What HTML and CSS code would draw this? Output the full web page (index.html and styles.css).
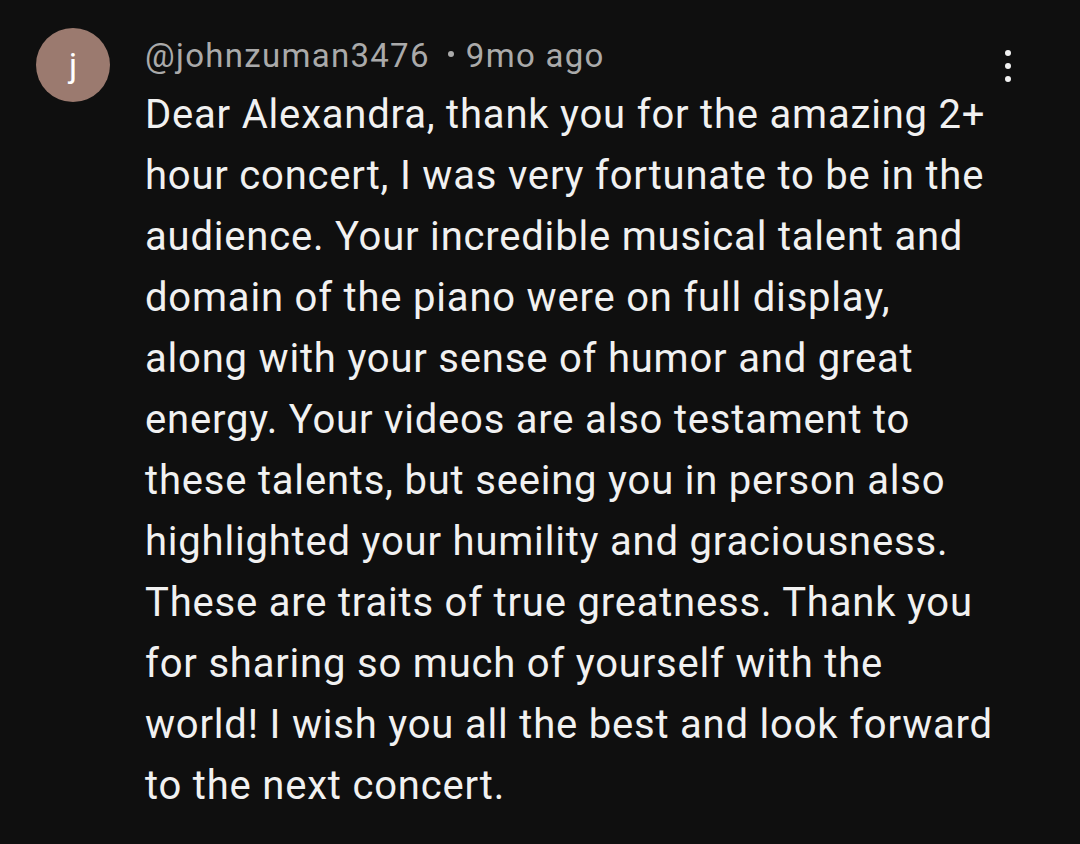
FILE: index.html
```html
<!DOCTYPE html>
<html>
<head>
<meta charset="utf-8">
<link rel="stylesheet" href="styles.css">
</head>
<body>
<div class="comment">
  <div class="avatar">j</div>
  <div class="content">
    <div class="meta"><span class="author">@johnzuman3476</span><span class="sep"></span><span class="time">9mo ago</span></div>
    <p class="text">Dear Alexandra, thank you for the amazing 2+<br>hour concert, I was very fortunate to be in the<br>audience. Your incredible musical talent and<br>domain of the piano were on full display,<br>along with your sense of humor and great<br>energy. Your videos are also testament to<br>these talents, but seeing you in person also<br>highlighted your humility and graciousness.<br>These are traits of true greatness. Thank you<br>for sharing so much of yourself with the<br>world! I wish you all the best and look forward<br>to the next concert.</p>
  </div>
  <div class="menu">
    <span class="dot"></span><span class="dot"></span><span class="dot"></span>
  </div>
</div>
</body>
</html>
```
FILE: styles.css
```css
html, body {
  margin: 0;
  padding: 0;
  background: #0f0f0f;
  height: 100%;
}
body {
  font-family: Roboto, "Liberation Sans", sans-serif;
  color: #f1f1f1;
}
.comment {
  display: flex;
  align-items: flex-start;
  padding: 28px 0 0 36px;
}
.avatar {
  flex: none;
  width: 74px;
  height: 74px;
  border-radius: 50%;
  background: #9b7a6f;
  color: #fff;
  font-size: 34px;
  display: flex;
  align-items: center;
  justify-content: center;
}
.content {
  margin-left: 35px;
  margin-top: 6px;
  width: 900px;
}
.meta {
  color: #aaaaaa;
  font-size: 33px;
  line-height: 44px;
  letter-spacing: 1.3px;
  white-space: nowrap;
}
.sep {
  display: inline-block;
  width: 6px;
  height: 6px;
  border-radius: 50%;
  background: #aaaaaa;
  margin: 0 12px 0 18px;
  vertical-align: 10px;
}
.text {
  margin: 6px 0 0;
  font-size: 40px;
  line-height: 61px;
  letter-spacing: 0.8px;
  white-space: nowrap;
}
.menu {
  margin-left: auto;
  margin-right: 69px;
  margin-top: 22px;
  display: flex;
  flex-direction: column;
  gap: 7px;
}
.dot {
  width: 6px;
  height: 6px;
  border-radius: 50%;
  background: #f1f1f1;
}
```
